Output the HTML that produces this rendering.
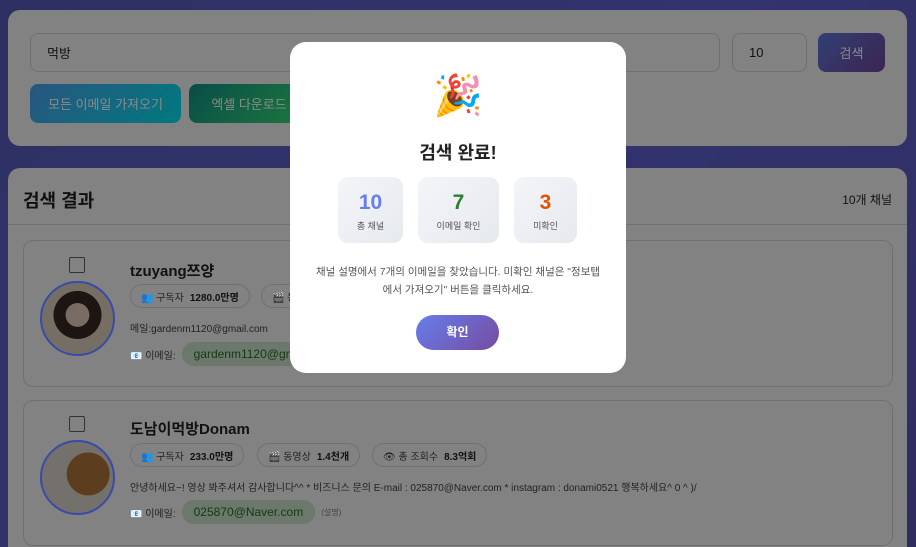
<!DOCTYPE html>
<html style="width:916px;height:547px;overflow:hidden"><head><meta charset="utf-8"><style>
*{box-sizing:border-box;margin:0;padding:0}
body{width:916px;height:547px;overflow:hidden;position:relative;font-family:"Liberation Sans","Noto Sans CJK KR",sans-serif;background:linear-gradient(135deg,#2e3062,#33336e 50%,#2f2c60);}
.panel{position:absolute;background:#828282;border-radius:12px;overflow:hidden}
.inp{position:absolute;border:1px solid #707070;border-radius:8px;background:#828282;font-size:13px;color:#111;padding-left:16px;display:flex;align-items:center}
.btn{position:absolute;border-radius:8px;color:#8a8a8a;font-size:13px;display:flex;align-items:center;justify-content:center}
.card{position:absolute;left:23px;width:870px;border:1px solid #707070;border-radius:10px;background:#828282}
.chk{position:absolute;width:16px;height:16px;border:1px solid #333;border-radius:2px}
.av{position:absolute;width:75px;height:75px;border-radius:50%;border:2px solid #3a4aa8;overflow:hidden}
.name{position:absolute;font-weight:bold;font-size:15px;color:#111}
.chip{position:absolute;height:24px;border:1px solid #707070;border-radius:12px;font-size:10px;color:#222;display:flex;align-items:center;padding:0 10px;gap:6px;white-space:nowrap}
.chip b{color:#111}
.desc{position:absolute;font-size:10px;color:#222;white-space:nowrap}
.em{position:absolute;font-size:10px;color:#222;display:flex;align-items:center;gap:6px}
.pill{background:#6c786c;color:#123a14;border-radius:12px;padding:5px 12px;font-size:12px}
.modal{position:absolute;z-index:11;left:290px;top:42px;width:336px;height:331px;background:#fff;border-radius:16px;text-align:center}
.st{position:absolute;top:135px;height:66px;border-radius:10px;background:linear-gradient(135deg,#f3f5f8,#e6e9ee)}
.st .n{font-size:21px;font-weight:bold;margin-top:14px}
.st .l{font-size:9px;color:#555;margin-top:4px}
</style></head><body>
<div class="panel" style="left:8px;top:10px;width:899px;height:136px">
<div class="inp" style="left:22px;top:23px;width:690px;height:39px">먹방</div>
<div class="inp" style="left:724px;top:23px;width:75px;height:39px">10</div>
<div class="btn" style="left:810px;top:23px;width:67px;height:39px;background:linear-gradient(135deg,#333f75,#3b2551)">검색</div>
<div class="btn" style="left:22px;top:74px;width:151px;height:39px;background:linear-gradient(135deg,#28567f,#00797f)">모든 이메일 가져오기</div>
<div class="btn" style="left:181px;top:74px;width:120px;height:39px;background:linear-gradient(135deg,#094d47,#1c783f)">엑셀 다운로드</div>
</div>
<div class="panel" style="left:8px;top:168px;width:899px;height:379px;border-radius:12px 12px 0 0">
<div style="position:absolute;left:15px;top:19px;font-size:18px;font-weight:bold;color:#111">검색 결과</div>
<div style="position:absolute;right:15px;top:23px;font-size:12px;color:#111">10개 채널</div>
<div style="position:absolute;left:0;right:0;top:56px;border-top:1px solid #707070"></div>
</div>
<div class="card" style="top:240px;height:147px">
<div class="chk" style="left:45px;top:16px"></div>
<div class="av" style="left:16px;top:40px;background:radial-gradient(circle at 50% 45%,#786c64 0 22%,#1d1511 23% 45%,#746e65 46%)"></div>
<div class="name" style="left:106px;top:19px">tzuyang쯔양</div>
<div class="chip" style="left:106px;top:43px">👥 구독자 <b>1280.0만명</b></div>
<div class="chip" style="left:237px;top:43px">🎬 동영상</div>
<div class="desc" style="left:106px;top:79px">메일:gardenm1120@gmail.com</div>
<div class="em" style="left:106px;top:101px">📧 이메일: <span class="pill">gardenm1120@gmail.com</span></div>
</div>
<div class="card" style="top:400px;height:146px">
<div class="chk" style="left:45px;top:15px"></div>
<div class="av" style="left:16px;top:39px;background:radial-gradient(circle at 65% 45%,#5c3d1d 0 35%,#74706c 36%)"></div>
<div class="name" style="left:106px;top:17px">도남이먹방Donam</div>
<div class="chip" style="left:106px;top:42px">👥 구독자 <b>233.0만명</b></div>
<div class="chip" style="left:233px;top:42px">🎬 동영상 <b>1.4천개</b></div>
<div class="chip" style="left:348px;top:42px">👁 총 조회수 <b>8.3억회</b></div>
<div class="desc" style="left:106px;top:78px">안녕하세요~! 영상 봐주셔서 감사합니다^^ * 비즈니스 문의 E-mail : 025870@Naver.com * instagram : donami0521 행복하세요^ 0 ^ )/</div>
<div class="em" style="left:106px;top:99px">📧 이메일: <span class="pill">025870@Naver.com</span> <span style="font-size:8px;color:#444">(설명)</span></div>
</div>
<div class="modal">
<div style="position:absolute;left:0;right:0;top:30px;font-size:40px;line-height:48px">🎉</div>
<div style="position:absolute;left:0;right:0;top:97px;font-size:18px;font-weight:bold;color:#222">검색 완료!</div>
<div class="st" style="left:48px;width:65px"><div class="n" style="color:#667eea">10</div><div class="l">총 채널</div></div>
<div class="st" style="left:128px;width:81px"><div class="n" style="color:#2e7d32">7</div><div class="l">이메일 확인</div></div>
<div class="st" style="left:224px;width:63px"><div class="n" style="color:#e65100">3</div><div class="l">미확인</div></div>
<div style="position:absolute;left:20px;right:20px;top:221px;font-size:10.5px;line-height:18px;color:#555">채널 설명에서 7개의 이메일을 찾았습니다. 미확인 채널은 "정보탭<br>에서 가져오기" 버튼을 클릭하세요.</div>
<div style="position:absolute;left:126px;top:273px;width:83px;height:35px;border-radius:18px;background:linear-gradient(135deg,#667eea,#764ba2);color:#fff;font-weight:bold;font-size:12px;line-height:35px">확인</div>
</div>
</body></html>
